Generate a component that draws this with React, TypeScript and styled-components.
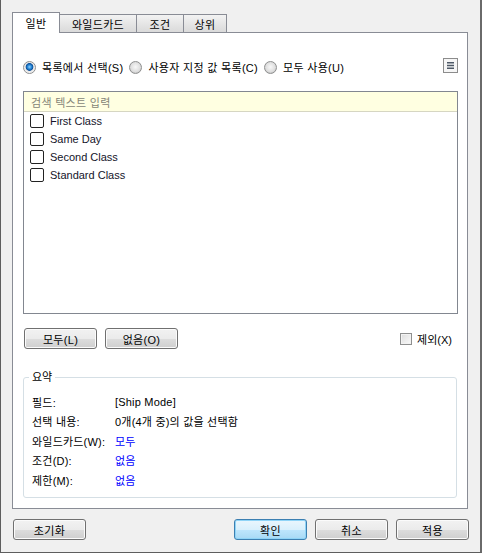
import React, { useState } from "react";
import styled, { createGlobalStyle } from "styled-components";

const GlobalStyle = createGlobalStyle`
  html, body {
    margin: 0;
    padding: 0;
    background: #f0f0f0;
  }
  body {
    font-family: "Liberation Sans", "Noto Sans CJK KR", sans-serif;
    font-size: 11px;
    color: #000;
  }
`;

const Window = styled.div`
  width: 482px;
  height: 553px;
  box-sizing: border-box;
  background: #f0f0f0;
  border-left: 1px solid #5e5e5e;
  border-right: 2px solid #6a6a6a;
  border-bottom: 1px solid #5e5e5e;
  padding: 12px 0 0 11px;
`;

const TabBar = styled.div`
  display: flex;
  align-items: flex-end;
  height: 20px;
`;

const Tab = styled.div<{ $active?: boolean; $w: number }>`
  position: relative;
  z-index: ${(p) => (p.$active ? 1 : 0)};
  box-sizing: border-box;
  width: ${(p) => p.$w}px;
  height: ${(p) => (p.$active ? 21 : 18)}px;
  margin-bottom: ${(p) => (p.$active ? -1 : 0)}px;
  border: 1px solid #898c95;
  border-bottom: none;
  background: ${(p) =>
    p.$active ? "#fff" : "linear-gradient(#f3f3f3, #e6e6e6 50%, #dadada)"};
  display: flex;
  align-items: center;
  justify-content: center;
  font-size: 11px;
  letter-spacing: 0.3px;
  cursor: default;

  & + & {
    margin-left: -1px;
  }
`;

const Panel = styled.div`
  width: 456px;
  height: 477px;
  box-sizing: border-box;
  border: 1px solid #898c95;
  background: #fff;
  display: flex;
  flex-direction: column;
`;

const RadioRow = styled.div`
  display: flex;
  align-items: center;
  height: 14px;
  margin: 27px 9px 0 10px;
`;

const RadioOption = styled.label`
  display: flex;
  align-items: center;
  gap: 6px;
  margin-right: 6px;
  white-space: nowrap;
  letter-spacing: 0.3px;
`;

const RadioDot = styled.span<{ $checked?: boolean }>`
  width: 13px;
  height: 13px;
  box-sizing: border-box;
  border-radius: 50%;
  border: 1px solid #8e8f8f;
  background: ${(p) =>
    p.$checked
      ? "radial-gradient(circle at 50% 45%, #8fd0ff 0, #2a8ad8 2px, #0b4f9a 3.5px, #e6e6e6 4.2px, #f4f4f4 6px)"
      : "radial-gradient(circle at 50% 45%, #f8f8f8 0, #dcdcdc 5px, #c8c8c8 6px)"};
`;

const MenuButton = styled.div`
  margin-left: auto;
  width: 15px;
  height: 15px;
  display: flex;
  margin-top: -4px;
`;

const ListBox = styled.div`
  margin: 17px 0 0 10px;
  width: 435px;
  height: 223px;
  box-sizing: border-box;
  border: 1px solid #828790;
  background: #fff;
`;

const Search = styled.div`
  height: 20px;
  box-sizing: border-box;
  background: #ffffe1;
  border-bottom: 1px solid #d6d6c2;
  padding-left: 7px;
  display: flex;
  align-items: center;
  color: #858578;
  font-size: 11px;
  letter-spacing: 0.3px;
`;

const Items = styled.div`
  padding: 2px 0 0 6px;
`;

const Item = styled.label`
  display: flex;
  gap: 6px;
  height: 18px;
  align-items: flex-start;
  color: #14142a;
`;

const Box = styled.span<{ $checked?: boolean }>`
  width: 14px;
  height: 14px;
  box-sizing: border-box;
  border: 1px solid #222;
  border-radius: 2px;
  background: #fff;
  display: flex;
  align-items: center;
  justify-content: center;
  font-size: 11px;
  line-height: 1;
`;

const ItemText = styled.span`
  line-height: 15px;
`;

const ButtonRow = styled.div`
  display: flex;
  align-items: center;
  gap: 8px;
  height: 21px;
  margin: 14px 15px 0 11px;
`;

const Button = styled.button<{ $primary?: boolean }>`
  width: 73px;
  height: 21px;
  box-sizing: border-box;
  padding: 0;
  border: 1px solid ${(p) => (p.$primary ? "#3c7fb1" : "#707070")};
  border-radius: 3px;
  background: ${(p) =>
    p.$primary
      ? "linear-gradient(#eaf6fd, #d9f0fc 50%, #bee6fd 51%, #a7d9f5)"
      : "linear-gradient(#f2f2f2, #ebebeb 50%, #dddddd 51%, #cfcfcf)"};
  box-shadow: inset 0 0 0 1px ${(p) => (p.$primary ? "#8fd4f7" : "#fbfbfb")};
  font-family: "Liberation Sans", "Noto Sans CJK KR", sans-serif;
  font-size: 11px;
  letter-spacing: 0.3px;
  color: #000;
  cursor: default;
`;

const Exclude = styled.label`
  margin-left: auto;
  display: flex;
  align-items: center;
  gap: 5px;
`;

const SmallBox = styled.span`
  width: 12px;
  height: 12px;
  box-sizing: border-box;
  border: 1px solid #8e8f8f;
  background: linear-gradient(135deg, #dcdcdc, #fafafa);
  box-shadow: inset 0 0 0 1px #f2f2f2;
`;

const Group = styled.div`
  position: relative;
  margin: 28px 0 0 10px;
  width: 434px;
  height: 121px;
  box-sizing: border-box;
  border: 1px solid #d5dfe5;
  border-radius: 3px;
  padding: 14px 0 0 8px;
`;

const Legend = styled.span`
  position: absolute;
  top: -8px;
  left: 5px;
  padding: 0 3px;
  background: #fff;
  line-height: 14px;
`;

const SummaryGrid = styled.div`
  display: grid;
  grid-template-columns: 83px 1fr;
  grid-auto-rows: 19.5px;
  align-items: center;
  letter-spacing: 0.2px;
`;

const Value = styled.span<{ $link?: boolean }>`
  color: ${(p) => (p.$link ? "#0000ff" : "#000")};
`;

const BottomBar = styled.div`
  display: flex;
  width: 456px;
  margin: 10px 0 0 1px;
`;

const RightGroup = styled.div`
  margin-left: auto;
  display: flex;
  gap: 8px;
`;

const tabs = [
  { label: "일반", w: 48 },
  { label: "와일드카드", w: 78 },
  { label: "조건", w: 48 },
  { label: "상위", w: 44 },
];

const values = ["First Class", "Same Day", "Second Class", "Standard Class"];

const modes = ["목록에서 선택(S)", "사용자 지정 값 목록(C)", "모두 사용(U)"];

export default function App() {
  const [tab, setTab] = useState(0);
  const [mode, setMode] = useState(0);
  const [checked, setChecked] = useState<string[]>([]);

  const toggle = (v: string) =>
    setChecked((c) => (c.includes(v) ? c.filter((x) => x !== v) : [...c, v]));

  return (
    <>
      <GlobalStyle />
      <Window>
        <TabBar>
          {tabs.map((t, i) => (
            <Tab key={t.label} $w={t.w} $active={tab === i} onClick={() => setTab(i)}>
              {t.label}
            </Tab>
          ))}
        </TabBar>
        <Panel>
          <RadioRow>
            {modes.map((m, i) => (
              <RadioOption key={m} onClick={() => setMode(i)}>
                <RadioDot $checked={mode === i} />
                {m}
              </RadioOption>
            ))}
            <MenuButton>
              <svg width="15" height="15" viewBox="0 0 15 15">
                <rect x="0.5" y="0.5" width="14" height="14" fill="#f6f6f6" stroke="#8c8c8c" />
                <rect x="4" y="4" width="7" height="1.5" fill="#4d5866" />
                <rect x="4" y="6.75" width="7" height="1.5" fill="#4d5866" />
                <rect x="4" y="9.5" width="7" height="1.5" fill="#4d5866" />
              </svg>
            </MenuButton>
          </RadioRow>

          <ListBox>
            <Search>검색 텍스트 입력</Search>
            <Items>
              {values.map((v) => (
                <Item key={v} onClick={() => toggle(v)}>
                  <Box>{checked.includes(v) ? "✓" : ""}</Box>
                  <ItemText>{v}</ItemText>
                </Item>
              ))}
            </Items>
          </ListBox>

          <ButtonRow>
            <Button onClick={() => setChecked(values)}>모두(L)</Button>
            <Button onClick={() => setChecked([])}>없음(O)</Button>
            <Exclude>
              <SmallBox />
              제외(X)
            </Exclude>
          </ButtonRow>

          <Group>
            <Legend>요약</Legend>
            <SummaryGrid>
              <span>필드:</span>
              <Value>[Ship Mode]</Value>
              <span>선택 내용:</span>
              <Value>{checked.length}개(4개 중)의 값을 선택함</Value>
              <span>와일드카드(W):</span>
              <Value $link>모두</Value>
              <span>조건(D):</span>
              <Value $link>없음</Value>
              <span>제한(M):</span>
              <Value $link>없음</Value>
            </SummaryGrid>
          </Group>
        </Panel>

        <BottomBar>
          <Button>초기화</Button>
          <RightGroup>
            <Button $primary>확인</Button>
            <Button>취소</Button>
            <Button>적용</Button>
          </RightGroup>
        </BottomBar>
      </Window>
    </>
  );
}
